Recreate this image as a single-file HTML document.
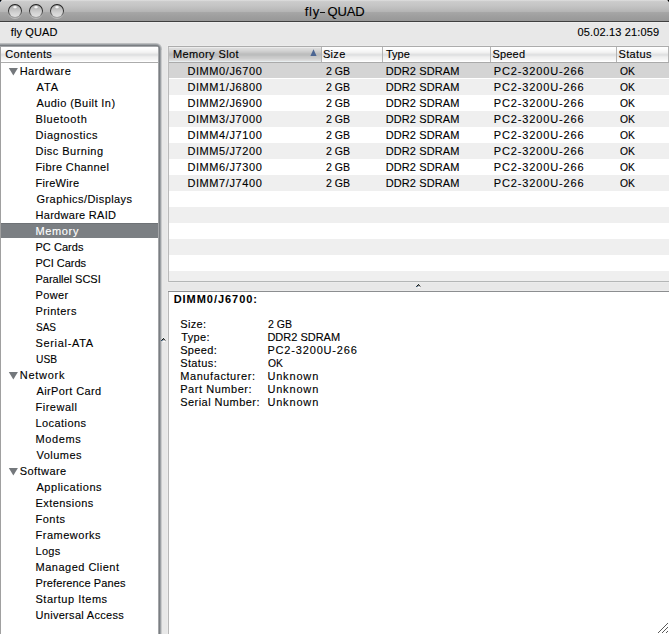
<!DOCTYPE html>
<html><head><meta charset="utf-8"><style>
html,body{margin:0;padding:0;}
body{width:669px;height:634px;overflow:hidden;position:relative;background:#e8e8e8;font-family:"Liberation Sans", sans-serif;}
.t{position:absolute;white-space:pre;line-height:12px;height:12px;-webkit-text-stroke:0.12px currentColor;}
.tri{position:absolute;left:9px;width:0;height:0;border-left:4.5px solid transparent;border-right:4.5px solid transparent;border-top:7px solid #7a7a7a;}
#title{position:absolute;left:0;top:0;width:669px;height:21px;
 background:linear-gradient(#e4e4e4 0px,#cfcfcf 1px,#cacaca 2px,#c6c6c6 5px,#bcbcbc 9px,#b4b4b4 12px,#a8a8a8 12px,#a3a3a3 14px,#9c9c9c 18px,#989898 21px);}
#tline{position:absolute;left:0;top:21px;width:669px;height:1px;background:#404040;}
.btn{position:absolute;top:4px;width:14px;height:14px;border-radius:50%;
 background:linear-gradient(#1e1e1e,#2a2a2a 45%,#6a6a6a 70%,#9a9a9a 90%,#a8a8a8);box-shadow:0 1px 0 rgba(225,225,225,0.45);}
.btn::after{content:"";position:absolute;left:1px;top:1px;width:12px;height:12px;border-radius:50%;
 background:radial-gradient(ellipse 2.4px 1.6px at 50% 2.2px,#ffffff 0,#f2f2f2 45%,rgba(240,240,240,0) 100%),linear-gradient(#acacac 0px,#b4b4b4 2px,#c4c4c4 5px,#d4d4d4 8px,#e0e0e0 12px);}
#sb{position:absolute;left:0;top:43px;width:162px;height:600px;}
.hdr{background:linear-gradient(#ffffff 0px,#ffffff 1px,#fdfdfd 1px,#fdfdfd 2px,#fbfbfb 2px,#fbfbfb 3px,#f8f8f8 3px,#f8f8f8 4px,#f5f5f5 4px,#f5f5f5 5px,#f1f1f1 5px,#f1f1f1 6px,#e9e9e9 6px,#e9e9e9 7px,#e0e1e2 7px,#e0e1e2 8px,#e2e3e4 8px,#e2e3e4 9px,#ebebeb 9px,#ebebeb 10px,#f0f0f0 10px,#f0f0f0 11px,#f2f2f2 11px,#f2f2f2 12px,#f5f5f5 12px,#f5f5f5 13px,#f9f9f9 13px,#f9f9f9 14px,#ffffff 14px,#ffffff 15px);}
</style></head><body>
<div id="title"></div><div id="tline"></div><div style="position:absolute;left:0;top:22px;width:669px;height:1px;background:#eeeeee"></div>
<div style="position:absolute;left:0px;top:0px;width:1px;height:1px;background:#000"></div><div style="position:absolute;left:1px;top:0px;width:1px;height:1px;background:#808080"></div><div style="position:absolute;left:0px;top:1px;width:1px;height:1px;background:#3c4a60"></div><div style="position:absolute;left:1px;top:1px;width:1px;height:1px;background:#d4d4d4"></div><div style="position:absolute;left:668px;top:0px;width:1px;height:1px;background:#000"></div><div style="position:absolute;left:667px;top:0px;width:1px;height:1px;background:#909090"></div><div style="position:absolute;left:668px;top:1px;width:1px;height:1px;background:#5a5a5a"></div><div style="position:absolute;left:667px;top:1px;width:1px;height:1px;background:#d4d4d4"></div>
<div style="position:absolute;left:320px;top:12px;width:5px;height:1px;background:#141414"></div>
<div class="btn" style="left:8px"></div><div class="btn" style="left:29px"></div><div class="btn" style="left:50px"></div>

<!-- sidebar frame -->
<div style="position:absolute;left:-10px;top:43px;width:172px;height:700px;border-radius:6px;background:#bcbebf"></div>
<div style="position:absolute;left:-10px;top:44px;width:171px;height:700px;border-radius:5px;background:#9ca0a4"></div>
<div style="position:absolute;left:-10px;top:45px;width:170px;height:700px;border-radius:4px;background:#7a7e82"></div>
<div style="position:absolute;left:-10px;top:46px;width:169px;height:700px;border-radius:3px;background:#a4a6a9"></div>
<div style="position:absolute;left:-10px;top:47px;width:168px;height:700px;border-radius:2px;background:#fff"></div>
<div style="position:absolute;left:161px;top:50px;width:1px;height:584px;background:#cacbcc"></div>
<div style="position:absolute;left:0;top:47px;width:1px;height:587px;background:#a0a0a0"></div>
<div class="hdr" style="position:absolute;left:1px;top:47px;width:157px;height:15px"></div>
<div style="position:absolute;left:1px;top:62px;width:157px;height:1px;background:#acacac"></div>
<div style="position:absolute;left:1px;top:223px;width:157px;height:15px;background:#7b7f83;border-top:1px solid #6e7276;box-sizing:border-box"></div>
<svg style="position:absolute;left:0;top:63px" width="20" height="16"><polygon points="8.8,4.9 17.9,4.9 13.35,12.6" fill="#74787c"/></svg><svg style="position:absolute;left:0;top:367px" width="20" height="16"><polygon points="8.8,4.9 17.9,4.9 13.35,12.6" fill="#74787c"/></svg><svg style="position:absolute;left:0;top:463px" width="20" height="16"><polygon points="8.8,4.9 17.9,4.9 13.35,12.6" fill="#74787c"/></svg>

<!-- table -->
<div style="position:absolute;left:167px;top:45px;width:502px;height:238px;background:#ececec"></div>
<div style="position:absolute;left:168px;top:46px;width:501px;height:236px;background:#b4b6b6"></div>
<div style="position:absolute;left:168px;top:46px;width:1px;height:236px;background:#bababa"></div>
<div style="position:absolute;left:168px;top:46px;width:501px;height:1px;background:#acacac"></div>
<div class="hdr" style="position:absolute;left:169px;top:47px;width:500px;height:15px"></div>
<div style="position:absolute;left:169px;top:47px;width:152px;height:15px;background:linear-gradient(#ececec 0px,#ececec 1px,#dcdcdc 1px,#dcdcdc 2px,#d8d8d8 2px,#d8d8d8 3px,#d4d4d4 3px,#d4d4d4 4px,#cecece 4px,#cecece 5px,#c8c8c8 5px,#c8c8c8 6px,#c0c0c0 6px,#c0c0c0 7px,#bcbdbd 7px,#bcbdbd 8px,#bebfbf 8px,#bebfbf 9px,#c6c6c6 9px,#c6c6c6 10px,#cacaca 10px,#cacaca 11px,#cecece 11px,#cecece 12px,#d6d6d6 12px,#d6d6d6 13px,#dcdcdc 13px,#dcdcdc 14px,#e8eef0 14px,#e8eef0 15px)"></div>
<svg style="position:absolute;left:300px;top:46px" width="20" height="14"><polygon points="10.4,10 16.6,10 13.5,3.3" fill="#4b6592"/></svg>
<div style="position:absolute;left:321px;top:47px;width:1px;height:15px;background:#b4b4b4"></div>
<div style="position:absolute;left:382px;top:47px;width:1px;height:15px;background:#b4b4b4"></div>
<div style="position:absolute;left:490px;top:47px;width:1px;height:15px;background:#b4b4b4"></div>
<div style="position:absolute;left:616px;top:47px;width:1px;height:15px;background:#b4b4b4"></div>
<div style="position:absolute;left:668px;top:47px;width:1px;height:15px;background:#b4b4b4"></div>
<div style="position:absolute;left:169px;top:62px;width:500px;height:1px;background:#aaaaaa"></div>
<div style="position:absolute;left:169px;top:63px;width:500px;height:218px;background:#fff"></div>
<div style="position:absolute;left:169px;top:63px;width:500px;height:15px;background:#d4d4d4"></div><div style="position:absolute;left:169px;top:79px;width:500px;height:16px;background:#efefef"></div><div style="position:absolute;left:169px;top:111px;width:500px;height:16px;background:#efefef"></div><div style="position:absolute;left:169px;top:143px;width:500px;height:16px;background:#efefef"></div><div style="position:absolute;left:169px;top:175px;width:500px;height:16px;background:#efefef"></div><div style="position:absolute;left:169px;top:207px;width:500px;height:16px;background:#efefef"></div><div style="position:absolute;left:169px;top:239px;width:500px;height:16px;background:#efefef"></div><div style="position:absolute;left:169px;top:271px;width:500px;height:10px;background:#efefef"></div>

<!-- detail -->
<div style="position:absolute;left:167px;top:290px;width:502px;height:344px;background:#ececec"></div>
<div style="position:absolute;left:168px;top:291px;width:501px;height:343px;background:#b8b8b8"></div>
<div style="position:absolute;left:168px;top:291px;width:501px;height:1px;background:#8c8e90"></div>
<div style="position:absolute;left:169px;top:292px;width:500px;height:342px;background:#fff"></div>
<div style="position:absolute;left:658px;top:632px;width:1px;height:1px;background:#5a5a5a"></div><div style="position:absolute;left:659px;top:631px;width:1px;height:1px;background:#5a5a5a"></div><div style="position:absolute;left:660px;top:630px;width:1px;height:1px;background:#5a5a5a"></div><div style="position:absolute;left:661px;top:629px;width:1px;height:1px;background:#5a5a5a"></div><div style="position:absolute;left:662px;top:628px;width:1px;height:1px;background:#5a5a5a"></div><div style="position:absolute;left:663px;top:627px;width:1px;height:1px;background:#5a5a5a"></div><div style="position:absolute;left:664px;top:626px;width:1px;height:1px;background:#5a5a5a"></div><div style="position:absolute;left:665px;top:625px;width:1px;height:1px;background:#5a5a5a"></div><div style="position:absolute;left:666px;top:624px;width:1px;height:1px;background:#5a5a5a"></div><div style="position:absolute;left:667px;top:623px;width:1px;height:1px;background:#5a5a5a"></div><div style="position:absolute;left:662px;top:632px;width:1px;height:1px;background:#5a5a5a"></div><div style="position:absolute;left:663px;top:631px;width:1px;height:1px;background:#5a5a5a"></div><div style="position:absolute;left:664px;top:630px;width:1px;height:1px;background:#5a5a5a"></div><div style="position:absolute;left:665px;top:629px;width:1px;height:1px;background:#5a5a5a"></div><div style="position:absolute;left:666px;top:628px;width:1px;height:1px;background:#5a5a5a"></div><div style="position:absolute;left:667px;top:627px;width:1px;height:1px;background:#5a5a5a"></div><div style="position:absolute;left:666px;top:632px;width:1px;height:1px;background:#5a5a5a"></div><div style="position:absolute;left:667px;top:631px;width:1px;height:1px;background:#5a5a5a"></div><div style="position:absolute;left:418px;top:283px;width:1px;height:1px;background:#f6f6f6"></div><div style="position:absolute;left:418px;top:284px;width:1px;height:1px;background:#1e3430"></div><div style="position:absolute;left:417px;top:285px;width:1px;height:1px;background:#141414"></div><div style="position:absolute;left:416px;top:286px;width:1px;height:1px;background:#30485a"></div><div style="position:absolute;left:419px;top:285px;width:1px;height:1px;background:#3c3c3c"></div><div style="position:absolute;left:420px;top:286px;width:1px;height:1px;background:#9a9a9a"></div><div style="position:absolute;left:418px;top:285px;width:1px;height:1px;background:#707070"></div><div style="position:absolute;left:417px;top:286px;width:1px;height:1px;background:#8098b0"></div><div style="position:absolute;left:418px;top:286px;width:1px;height:1px;background:#d0d0d0"></div><div style="position:absolute;left:419px;top:286px;width:1px;height:1px;background:#c8c8c8"></div><div style="position:absolute;left:418px;top:287px;width:2px;height:1px;background:#ffffff"></div><div style="position:absolute;left:163px;top:337px;width:1px;height:1px;background:#f6f6f6"></div><div style="position:absolute;left:163px;top:338px;width:1px;height:1px;background:#1e3430"></div><div style="position:absolute;left:162px;top:339px;width:1px;height:1px;background:#141414"></div><div style="position:absolute;left:161px;top:340px;width:1px;height:1px;background:#30485a"></div><div style="position:absolute;left:164px;top:339px;width:1px;height:1px;background:#3c3c3c"></div><div style="position:absolute;left:165px;top:340px;width:1px;height:1px;background:#9a9a9a"></div><div style="position:absolute;left:163px;top:339px;width:1px;height:1px;background:#707070"></div><div style="position:absolute;left:162px;top:340px;width:1px;height:1px;background:#8098b0"></div><div style="position:absolute;left:163px;top:340px;width:1px;height:1px;background:#d0d0d0"></div><div style="position:absolute;left:164px;top:340px;width:1px;height:1px;background:#c8c8c8"></div><div style="position:absolute;left:163px;top:341px;width:2px;height:1px;background:#ffffff"></div>
<div class="t" style="left:304.70px;top:4.00px;line-height:15px;height:15px;font-size:13px;font-weight:normal;color:#000;letter-spacing:0.800px">fly</div><div class="t" style="left:327.40px;top:4.00px;line-height:15px;height:15px;font-size:13px;font-weight:normal;color:#000;letter-spacing:-0.067px">QUAD</div><div class="t" style="left:10.70px;top:26.30px;line-height:12px;height:12px;font-size:11px;font-weight:normal;color:#000;letter-spacing:0.143px">fly QUAD</div><div class="t" style="left:577.40px;top:26.30px;line-height:12px;height:12px;font-size:11px;font-weight:normal;color:#000;letter-spacing:0.157px">05.02.13 21:059</div><div class="t" style="left:5.20px;top:48.00px;line-height:12px;height:12px;font-size:11px;font-weight:normal;color:#000;letter-spacing:0.371px">Contents</div><div class="t" style="left:19.70px;top:65.00px;line-height:12px;height:12px;font-size:11px;font-weight:normal;color:#000;letter-spacing:0.486px">Hardware</div><div class="t" style="left:36.50px;top:81.00px;line-height:12px;height:12px;font-size:11px;font-weight:normal;color:#000;letter-spacing:0.950px">ATA</div><div class="t" style="left:36.50px;top:97.00px;line-height:12px;height:12px;font-size:11px;font-weight:normal;color:#000;letter-spacing:0.427px">Audio (Built In)</div><div class="t" style="left:35.50px;top:113.00px;line-height:12px;height:12px;font-size:11px;font-weight:normal;color:#000;letter-spacing:0.600px">Bluetooth</div><div class="t" style="left:35.50px;top:129.00px;line-height:12px;height:12px;font-size:11px;font-weight:normal;color:#000;letter-spacing:0.510px">Diagnostics</div><div class="t" style="left:35.50px;top:145.00px;line-height:12px;height:12px;font-size:11px;font-weight:normal;color:#000;letter-spacing:0.473px">Disc Burning</div><div class="t" style="left:35.50px;top:161.00px;line-height:12px;height:12px;font-size:11px;font-weight:normal;color:#000;letter-spacing:0.367px">Fibre Channel</div><div class="t" style="left:35.50px;top:177.00px;line-height:12px;height:12px;font-size:11px;font-weight:normal;color:#000;letter-spacing:0.286px">FireWire</div><div class="t" style="left:36.50px;top:193.00px;line-height:12px;height:12px;font-size:11px;font-weight:normal;color:#000;letter-spacing:0.431px">Graphics/Displays</div><div class="t" style="left:35.50px;top:209.00px;line-height:12px;height:12px;font-size:11px;font-weight:normal;color:#000;letter-spacing:0.292px">Hardware RAID</div><div class="t" style="left:35.50px;top:225.00px;line-height:12px;height:12px;font-size:11px;font-weight:normal;color:#fff;letter-spacing:0.640px">Memory</div><div class="t" style="left:35.50px;top:241.00px;line-height:12px;height:12px;font-size:11px;font-weight:normal;color:#000;letter-spacing:0.029px">PC Cards</div><div class="t" style="left:35.50px;top:257.00px;line-height:12px;height:12px;font-size:11px;font-weight:normal;color:#000;letter-spacing:-0.025px">PCI Cards</div><div class="t" style="left:35.50px;top:273.00px;line-height:12px;height:12px;font-size:11px;font-weight:normal;color:#000;letter-spacing:-0.017px">Parallel SCSI</div><div class="t" style="left:35.50px;top:289.00px;line-height:12px;height:12px;font-size:11px;font-weight:normal;color:#000;letter-spacing:0.350px">Power</div><div class="t" style="left:35.50px;top:305.00px;line-height:12px;height:12px;font-size:11px;font-weight:normal;color:#000;letter-spacing:0.429px">Printers</div><div class="t" style="left:35.50px;top:321.00px;line-height:12px;height:12px;font-size:11px;font-weight:normal;color:#000;letter-spacing:0.000px;transform:scaleX(0.910);transform-origin:0 0">SAS</div><div class="t" style="left:35.50px;top:337.00px;line-height:12px;height:12px;font-size:11px;font-weight:normal;color:#000;letter-spacing:0.667px">Serial-ATA</div><div class="t" style="left:35.50px;top:353.00px;line-height:12px;height:12px;font-size:11px;font-weight:normal;color:#000;letter-spacing:0.000px;transform:scaleX(0.929);transform-origin:0 0">USB</div><div class="t" style="left:19.70px;top:369.00px;line-height:12px;height:12px;font-size:11px;font-weight:normal;color:#000;letter-spacing:0.750px">Network</div><div class="t" style="left:36.50px;top:385.00px;line-height:12px;height:12px;font-size:11px;font-weight:normal;color:#000;letter-spacing:0.382px">AirPort Card</div><div class="t" style="left:35.50px;top:401.00px;line-height:12px;height:12px;font-size:11px;font-weight:normal;color:#000;letter-spacing:0.514px">Firewall</div><div class="t" style="left:35.50px;top:417.00px;line-height:12px;height:12px;font-size:11px;font-weight:normal;color:#000;letter-spacing:0.425px">Locations</div><div class="t" style="left:35.50px;top:433.00px;line-height:12px;height:12px;font-size:11px;font-weight:normal;color:#000;letter-spacing:0.620px">Modems</div><div class="t" style="left:36.50px;top:449.00px;line-height:12px;height:12px;font-size:11px;font-weight:normal;color:#000;letter-spacing:0.483px">Volumes</div><div class="t" style="left:19.70px;top:465.00px;line-height:12px;height:12px;font-size:11px;font-weight:normal;color:#000;letter-spacing:0.443px">Software</div><div class="t" style="left:36.50px;top:481.00px;line-height:12px;height:12px;font-size:11px;font-weight:normal;color:#000;letter-spacing:0.527px">Applications</div><div class="t" style="left:35.50px;top:497.00px;line-height:12px;height:12px;font-size:11px;font-weight:normal;color:#000;letter-spacing:0.444px">Extensions</div><div class="t" style="left:35.50px;top:513.00px;line-height:12px;height:12px;font-size:11px;font-weight:normal;color:#000;letter-spacing:0.475px">Fonts</div><div class="t" style="left:35.50px;top:529.00px;line-height:12px;height:12px;font-size:11px;font-weight:normal;color:#000;letter-spacing:0.511px">Frameworks</div><div class="t" style="left:35.50px;top:545.00px;line-height:12px;height:12px;font-size:11px;font-weight:normal;color:#000;letter-spacing:0.267px">Logs</div><div class="t" style="left:35.50px;top:561.00px;line-height:12px;height:12px;font-size:11px;font-weight:normal;color:#000;letter-spacing:0.500px">Managed Client</div><div class="t" style="left:35.50px;top:577.00px;line-height:12px;height:12px;font-size:11px;font-weight:normal;color:#000;letter-spacing:0.133px">Preference Panes</div><div class="t" style="left:35.50px;top:593.00px;line-height:12px;height:12px;font-size:11px;font-weight:normal;color:#000;letter-spacing:0.517px">Startup Items</div><div class="t" style="left:35.50px;top:609.00px;line-height:12px;height:12px;font-size:11px;font-weight:normal;color:#000;letter-spacing:0.300px">Universal Access</div><div class="t" style="left:172.90px;top:48.00px;line-height:12px;height:12px;font-size:11px;font-weight:normal;color:#000;letter-spacing:0.400px">Memory Slot</div><div class="t" style="left:322.90px;top:48.00px;line-height:12px;height:12px;font-size:11px;font-weight:normal;color:#000;letter-spacing:0.333px">Size</div><div class="t" style="left:386.00px;top:48.00px;line-height:12px;height:12px;font-size:11px;font-weight:normal;color:#000;letter-spacing:0.000px">Type</div><div class="t" style="left:492.60px;top:48.00px;line-height:12px;height:12px;font-size:11px;font-weight:normal;color:#000;letter-spacing:0.150px">Speed</div><div class="t" style="left:618.40px;top:48.00px;line-height:12px;height:12px;font-size:11px;font-weight:normal;color:#000;letter-spacing:0.400px">Status</div><div class="t" style="left:187.40px;top:65.00px;line-height:12px;height:12px;font-size:11px;font-weight:normal;color:#000;letter-spacing:0.600px">DIMM0/J6700</div><div class="t" style="left:325.90px;top:65.00px;line-height:12px;height:12px;font-size:11px;font-weight:normal;color:#000;letter-spacing:0.000px;transform:scaleX(0.960);transform-origin:0 0">2 GB</div><div class="t" style="left:385.70px;top:65.00px;line-height:12px;height:12px;font-size:11px;font-weight:normal;color:#000;letter-spacing:0.111px">DDR2 SDRAM</div><div class="t" style="left:493.70px;top:65.00px;line-height:12px;height:12px;font-size:11px;font-weight:normal;color:#000;letter-spacing:0.875px">PC2-3200U-266</div><div class="t" style="left:619.90px;top:65.00px;line-height:12px;height:12px;font-size:11px;font-weight:normal;color:#000;letter-spacing:0.000px;transform:scaleX(0.938);transform-origin:0 0">OK</div><div class="t" style="left:187.40px;top:81.00px;line-height:12px;height:12px;font-size:11px;font-weight:normal;color:#000;letter-spacing:0.600px">DIMM1/J6800</div><div class="t" style="left:325.90px;top:81.00px;line-height:12px;height:12px;font-size:11px;font-weight:normal;color:#000;letter-spacing:0.000px;transform:scaleX(0.960);transform-origin:0 0">2 GB</div><div class="t" style="left:385.70px;top:81.00px;line-height:12px;height:12px;font-size:11px;font-weight:normal;color:#000;letter-spacing:0.111px">DDR2 SDRAM</div><div class="t" style="left:493.70px;top:81.00px;line-height:12px;height:12px;font-size:11px;font-weight:normal;color:#000;letter-spacing:0.875px">PC2-3200U-266</div><div class="t" style="left:619.90px;top:81.00px;line-height:12px;height:12px;font-size:11px;font-weight:normal;color:#000;letter-spacing:0.000px;transform:scaleX(0.938);transform-origin:0 0">OK</div><div class="t" style="left:187.40px;top:97.00px;line-height:12px;height:12px;font-size:11px;font-weight:normal;color:#000;letter-spacing:0.600px">DIMM2/J6900</div><div class="t" style="left:325.90px;top:97.00px;line-height:12px;height:12px;font-size:11px;font-weight:normal;color:#000;letter-spacing:0.000px;transform:scaleX(0.960);transform-origin:0 0">2 GB</div><div class="t" style="left:385.70px;top:97.00px;line-height:12px;height:12px;font-size:11px;font-weight:normal;color:#000;letter-spacing:0.111px">DDR2 SDRAM</div><div class="t" style="left:493.70px;top:97.00px;line-height:12px;height:12px;font-size:11px;font-weight:normal;color:#000;letter-spacing:0.875px">PC2-3200U-266</div><div class="t" style="left:619.90px;top:97.00px;line-height:12px;height:12px;font-size:11px;font-weight:normal;color:#000;letter-spacing:0.000px;transform:scaleX(0.938);transform-origin:0 0">OK</div><div class="t" style="left:187.40px;top:113.00px;line-height:12px;height:12px;font-size:11px;font-weight:normal;color:#000;letter-spacing:0.600px">DIMM3/J7000</div><div class="t" style="left:325.90px;top:113.00px;line-height:12px;height:12px;font-size:11px;font-weight:normal;color:#000;letter-spacing:0.000px;transform:scaleX(0.960);transform-origin:0 0">2 GB</div><div class="t" style="left:385.70px;top:113.00px;line-height:12px;height:12px;font-size:11px;font-weight:normal;color:#000;letter-spacing:0.111px">DDR2 SDRAM</div><div class="t" style="left:493.70px;top:113.00px;line-height:12px;height:12px;font-size:11px;font-weight:normal;color:#000;letter-spacing:0.875px">PC2-3200U-266</div><div class="t" style="left:619.90px;top:113.00px;line-height:12px;height:12px;font-size:11px;font-weight:normal;color:#000;letter-spacing:0.000px;transform:scaleX(0.938);transform-origin:0 0">OK</div><div class="t" style="left:187.40px;top:129.00px;line-height:12px;height:12px;font-size:11px;font-weight:normal;color:#000;letter-spacing:0.600px">DIMM4/J7100</div><div class="t" style="left:325.90px;top:129.00px;line-height:12px;height:12px;font-size:11px;font-weight:normal;color:#000;letter-spacing:0.000px;transform:scaleX(0.960);transform-origin:0 0">2 GB</div><div class="t" style="left:385.70px;top:129.00px;line-height:12px;height:12px;font-size:11px;font-weight:normal;color:#000;letter-spacing:0.111px">DDR2 SDRAM</div><div class="t" style="left:493.70px;top:129.00px;line-height:12px;height:12px;font-size:11px;font-weight:normal;color:#000;letter-spacing:0.875px">PC2-3200U-266</div><div class="t" style="left:619.90px;top:129.00px;line-height:12px;height:12px;font-size:11px;font-weight:normal;color:#000;letter-spacing:0.000px;transform:scaleX(0.938);transform-origin:0 0">OK</div><div class="t" style="left:187.40px;top:145.00px;line-height:12px;height:12px;font-size:11px;font-weight:normal;color:#000;letter-spacing:0.600px">DIMM5/J7200</div><div class="t" style="left:325.90px;top:145.00px;line-height:12px;height:12px;font-size:11px;font-weight:normal;color:#000;letter-spacing:0.000px;transform:scaleX(0.960);transform-origin:0 0">2 GB</div><div class="t" style="left:385.70px;top:145.00px;line-height:12px;height:12px;font-size:11px;font-weight:normal;color:#000;letter-spacing:0.111px">DDR2 SDRAM</div><div class="t" style="left:493.70px;top:145.00px;line-height:12px;height:12px;font-size:11px;font-weight:normal;color:#000;letter-spacing:0.875px">PC2-3200U-266</div><div class="t" style="left:619.90px;top:145.00px;line-height:12px;height:12px;font-size:11px;font-weight:normal;color:#000;letter-spacing:0.000px;transform:scaleX(0.938);transform-origin:0 0">OK</div><div class="t" style="left:187.40px;top:161.00px;line-height:12px;height:12px;font-size:11px;font-weight:normal;color:#000;letter-spacing:0.600px">DIMM6/J7300</div><div class="t" style="left:325.90px;top:161.00px;line-height:12px;height:12px;font-size:11px;font-weight:normal;color:#000;letter-spacing:0.000px;transform:scaleX(0.960);transform-origin:0 0">2 GB</div><div class="t" style="left:385.70px;top:161.00px;line-height:12px;height:12px;font-size:11px;font-weight:normal;color:#000;letter-spacing:0.111px">DDR2 SDRAM</div><div class="t" style="left:493.70px;top:161.00px;line-height:12px;height:12px;font-size:11px;font-weight:normal;color:#000;letter-spacing:0.875px">PC2-3200U-266</div><div class="t" style="left:619.90px;top:161.00px;line-height:12px;height:12px;font-size:11px;font-weight:normal;color:#000;letter-spacing:0.000px;transform:scaleX(0.938);transform-origin:0 0">OK</div><div class="t" style="left:187.40px;top:177.00px;line-height:12px;height:12px;font-size:11px;font-weight:normal;color:#000;letter-spacing:0.600px">DIMM7/J7400</div><div class="t" style="left:325.90px;top:177.00px;line-height:12px;height:12px;font-size:11px;font-weight:normal;color:#000;letter-spacing:0.000px;transform:scaleX(0.960);transform-origin:0 0">2 GB</div><div class="t" style="left:385.70px;top:177.00px;line-height:12px;height:12px;font-size:11px;font-weight:normal;color:#000;letter-spacing:0.111px">DDR2 SDRAM</div><div class="t" style="left:493.70px;top:177.00px;line-height:12px;height:12px;font-size:11px;font-weight:normal;color:#000;letter-spacing:0.875px">PC2-3200U-266</div><div class="t" style="left:619.90px;top:177.00px;line-height:12px;height:12px;font-size:11px;font-weight:normal;color:#000;letter-spacing:0.000px;transform:scaleX(0.938);transform-origin:0 0">OK</div><div class="t" style="left:173.70px;top:293.00px;line-height:12px;height:12px;font-size:11px;font-weight:bold;color:#000;-webkit-text-stroke:0;letter-spacing:0.955px">DIMM0/J6700:</div><div class="t" style="left:180.20px;top:318.00px;line-height:12px;height:12px;font-size:11px;font-weight:normal;color:#000;letter-spacing:0.375px">Size:</div><div class="t" style="left:268.40px;top:318.00px;line-height:12px;height:12px;font-size:11px;font-weight:normal;color:#000;letter-spacing:0.000px;transform:scaleX(0.960);transform-origin:0 0">2 GB</div><div class="t" style="left:181.20px;top:331.00px;line-height:12px;height:12px;font-size:11px;font-weight:normal;color:#000;letter-spacing:0.375px">Type:</div><div class="t" style="left:267.40px;top:331.00px;line-height:12px;height:12px;font-size:11px;font-weight:normal;color:#000;letter-spacing:0.000px">DDR2 SDRAM</div><div class="t" style="left:180.20px;top:344.00px;line-height:12px;height:12px;font-size:11px;font-weight:normal;color:#000;letter-spacing:0.340px">Speed:</div><div class="t" style="left:267.40px;top:344.00px;line-height:12px;height:12px;font-size:11px;font-weight:normal;color:#000;letter-spacing:0.833px">PC2-3200U-266</div><div class="t" style="left:180.20px;top:357.00px;line-height:12px;height:12px;font-size:11px;font-weight:normal;color:#000;letter-spacing:0.383px">Status:</div><div class="t" style="left:268.40px;top:357.00px;line-height:12px;height:12px;font-size:11px;font-weight:normal;color:#000;letter-spacing:0.000px;transform:scaleX(0.938);transform-origin:0 0">OK</div><div class="t" style="left:180.20px;top:370.00px;line-height:12px;height:12px;font-size:11px;font-weight:normal;color:#000;letter-spacing:0.583px">Manufacturer:</div><div class="t" style="left:267.40px;top:370.00px;line-height:12px;height:12px;font-size:11px;font-weight:normal;color:#000;letter-spacing:0.833px">Unknown</div><div class="t" style="left:180.20px;top:383.00px;line-height:12px;height:12px;font-size:11px;font-weight:normal;color:#000;letter-spacing:0.545px">Part Number:</div><div class="t" style="left:267.40px;top:383.00px;line-height:12px;height:12px;font-size:11px;font-weight:normal;color:#000;letter-spacing:0.833px">Unknown</div><div class="t" style="left:180.20px;top:396.00px;line-height:12px;height:12px;font-size:11px;font-weight:normal;color:#000;letter-spacing:0.462px">Serial Number:</div><div class="t" style="left:267.40px;top:396.00px;line-height:12px;height:12px;font-size:11px;font-weight:normal;color:#000;letter-spacing:0.833px">Unknown</div>
</body></html>
